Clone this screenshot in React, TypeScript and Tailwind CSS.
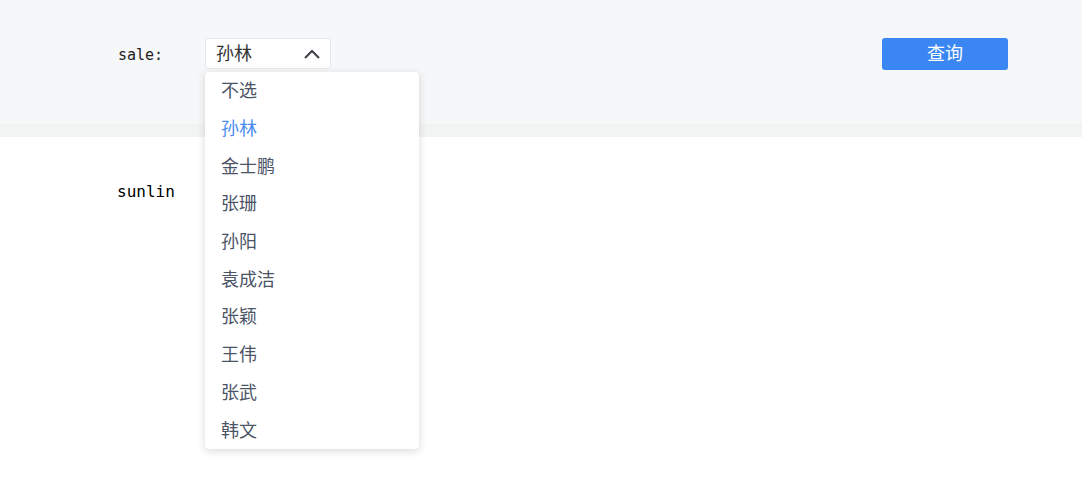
import { useState } from "react";

const sales = ["不选", "孙林", "金士鹏", "张珊", "孙阳", "袁成洁", "张颖", "王伟", "张武", "韩文"];

const cjk = { fontFamily: '"Noto Sans CJK SC", "Noto Sans", sans-serif' };
const mono = { fontFamily: '"DejaVu Sans Mono", "Liberation Mono", monospace' };

export default function App() {
  const [selected, setSelected] = useState("孙林");

  return (
    <div className="min-h-[478px] w-[1082px] bg-white" style={cjk}>
      {/* Filter bar */}
      <div className="relative h-[124px] bg-[#f6f7f9]">
        <div className="flex items-start pl-[118px] pr-[74px] pt-[38px]">
          <span className="mt-[6px] w-[87px] text-[15px] text-[#222]" style={mono}>
            sale:
          </span>
          <div className="relative">
            <button className="flex h-[31px] w-[126px] items-center justify-between rounded-[3px] border border-[#e6e8eb] bg-white pl-[10px] pr-[9px] text-[18px] text-[#333]">
              <span className="pb-[3px] leading-none">{selected}</span>
              <svg width="18" height="12" viewBox="0 0 18 12" fill="none">
                <path d="M2 10 L9 3 L16 10" stroke="#3d4248" strokeWidth="2" />
              </svg>
            </button>
            {/* Open menu */}
            <ul className="absolute left-0 top-[34px] z-10 w-[214px] rounded-[4px] bg-white shadow-[0_2px_8px_rgba(0,0,0,0.15)]">
              {sales.map((name) => (
                <li
                  key={name}
                  onClick={() => setSelected(name)}
                  className={
                    name === selected
                      ? "flex h-[37.7px] cursor-pointer items-center pb-[2px] pl-[16px] text-[18px] text-[#4a8cf1]"
                      : "flex h-[37.7px] cursor-pointer items-center pb-[2px] pl-[16px] text-[18px] text-[#4b5466]"
                  }
                >
                  {name}
                </li>
              ))}
            </ul>
          </div>
          <button className="ml-auto h-[32px] w-[126px] rounded-[3px] bg-[#3a87f4] pb-[3px] text-[18px] text-white">
            查询
          </button>
        </div>
      </div>
      <div className="h-[13px] bg-[#f2f3f3]" />

      {/* Result */}
      <div className="pl-[117px] pt-[41px]">
        <span className="text-[16px] text-black" style={mono}>
          {selected === "孙林" ? "sunlin" : selected}
        </span>
      </div>
    </div>
  );
}
